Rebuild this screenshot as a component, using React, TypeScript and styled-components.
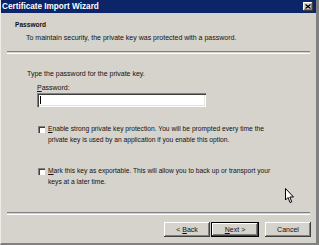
import React from 'react';
import styled, { createGlobalStyle, css } from 'styled-components';

const face = '#d6d3cd';
const shadow = '#808080';
const darkShadow = '#404040';
const highlight = '#ffffff';

const GlobalStyle = createGlobalStyle`
  html, body {
    margin: 0;
    padding: 0;
    background: ${face};
  }
  body {
    font-family: 'Liberation Sans', Arial, sans-serif;
    font-size: 7px;
    color: #111;
  }
`;

// classic raised 3D edge
const raised = css`
  box-shadow:
    inset -1px -1px 0 ${darkShadow},
    inset 1px 1px 0 ${highlight},
    inset -2px -2px 0 ${shadow};
`;

const Window = styled.div`
  box-sizing: border-box;
  width: 319px;
  height: 245px;
  display: flex;
  flex-direction: column;
  background: ${face};
  border-left: 1px solid #eeece8;
  border-right: 3px solid ${shadow};
  border-bottom: 2px solid ${shadow};
  position: relative;
  overflow: hidden;
`;

const TitleBar = styled.div`
  height: 13px;
  flex-shrink: 0;
  display: flex;
  align-items: center;
  justify-content: space-between;
  padding: 0 3px 0 1px;
  background: #0c2568;
`;

const Title = styled.span`
  color: #fff;
  font-weight: bold;
  font-size: 8.2px;
  line-height: 13px;
`;

const CloseButton = styled.div`
  width: 10px;
  height: 9px;
  box-sizing: border-box;
  background: ${face};
  ${raised};
  display: flex;
  align-items: center;
  justify-content: center;
`;

const Header = styled.div`
  padding: 7px 0 0 14px;
  line-height: 10px;
`;

const HeaderTitle = styled.div`
  font-weight: bold;
  font-size: 6.6px;
`;

const HeaderText = styled.div`
  margin: 3px 0 0 11px;
`;

const Separator = styled.div<{ $top: number }>`
  margin: ${(p) => p.$top}px 6px 0 6px;
  height: 1px;
  border-top: 1px solid ${shadow};
  border-bottom: 1px solid ${highlight};
`;

const Body = styled.div`
  flex: 1;
  display: flex;
  flex-direction: column;
  padding: 15px 0 0 26px;
  line-height: 10px;
`;

const FieldLabel = styled.div`
  margin: 4px 0 0 10px;
`;

const PasswordInput = styled.div`
  margin-left: 10px;
  width: 169px;
  height: 14px;
  box-sizing: border-box;
  background: #fff;
  box-shadow:
    inset 1px 1px 0 ${shadow},
    inset 2px 2px 0 ${darkShadow},
    inset -1px -1px 0 ${highlight},
    inset -2px -2px 0 #e6e4e0;
  display: flex;
  align-items: center;
  padding-left: 3px;
`;

const Caret = styled.span`
  width: 1px;
  height: 8px;
  background: #000;
`;

const CheckRow = styled.label<{ $top: number }>`
  display: flex;
  align-items: flex-start;
  gap: 3px;
  margin: ${(p) => p.$top}px 0 0 11px;
  line-height: 10.5px;
  font-size: 6.7px;
`;

const CheckBox = styled.span`
  flex-shrink: 0;
  width: 7px;
  height: 7px;
  margin-top: 2px;
  box-sizing: border-box;
  background: #fff;
  box-shadow:
    inset 1px 1px 0 ${shadow},
    inset 2px 2px 0 ${darkShadow};
`;

const Footer = styled.div`
  display: flex;
  flex-direction: column;
  padding-bottom: 6px;
`;

const ButtonRow = styled.div`
  display: flex;
  justify-content: flex-end;
  margin-top: 7px;
  padding-right: 5px;
`;

const Button = styled.div<{ $default?: boolean; $gap?: number }>`
  width: ${(p) => (p.$default ? 48 : 46)}px;
  height: 15px;
  box-sizing: border-box;
  margin-left: ${(p) => p.$gap ?? 0}px;
  display: flex;
  align-items: center;
  justify-content: center;
  background: ${face};
  ${raised};
  ${(p) =>
    p.$default &&
    css`
      box-shadow:
        inset 0 0 0 1px #000,
        inset -2px -2px 0 ${darkShadow},
        inset 2px 2px 0 ${highlight},
        inset -3px -3px 0 ${shadow};
    `}
`;

const Cursor = styled.svg`
  position: absolute;
  left: 284px;
  top: 188px;
`;

export default function App() {
  return (
    <>
      <GlobalStyle />
      <Window>
        <TitleBar>
          <Title>Certificate Import Wizard</Title>
          <CloseButton>
            <svg width="6" height="5" viewBox="0 0 6 5">
              <path d="M0.5 0.5 L5.5 4.5 M5.5 0.5 L0.5 4.5" stroke="#000" strokeWidth="1.3" />
            </svg>
          </CloseButton>
        </TitleBar>

        <Header>
          <HeaderTitle>Password</HeaderTitle>
          <HeaderText>To maintain security, the private key was protected with a password.</HeaderText>
        </Header>
        <Separator $top={8} />

        <Body>
          <div>Type the password for the private key.</div>
          <FieldLabel>
            <u>P</u>assword:
          </FieldLabel>
          <PasswordInput>
            <Caret />
          </PasswordInput>
          <CheckRow $top={17}>
            <CheckBox />
            <span>
              <u>E</u>nable strong private key protection. You will be prompted every time the
              <br />
              private key is used by an application if you enable this option.
            </span>
          </CheckRow>
          <CheckRow $top={21}>
            <CheckBox />
            <span>
              <u>M</u>ark this key as exportable. This will allow you to back up or transport your
              <br />
              keys at a later time.
            </span>
          </CheckRow>
        </Body>

        <Footer>
          <Separator $top={0} />
          <ButtonRow>
            <Button>
              <span>
                &lt; <u>B</u>ack
              </span>
            </Button>
            <Button $default $gap={1}>
              <span>
                <u>N</u>ext &gt;
              </span>
            </Button>
            <Button $gap={6}>
              <span>Cancel</span>
            </Button>
          </ButtonRow>
        </Footer>

        <Cursor width="10" height="16" viewBox="0 0 10 16">
          <path d="M0.5 0.5 L0.5 12 L3 9.5 L5 14.5 L6.8 13.8 L4.8 9 L8.5 9 Z" fill="#fff" stroke="#000" strokeWidth="1" />
        </Cursor>
      </Window>
    </>
  );
}
